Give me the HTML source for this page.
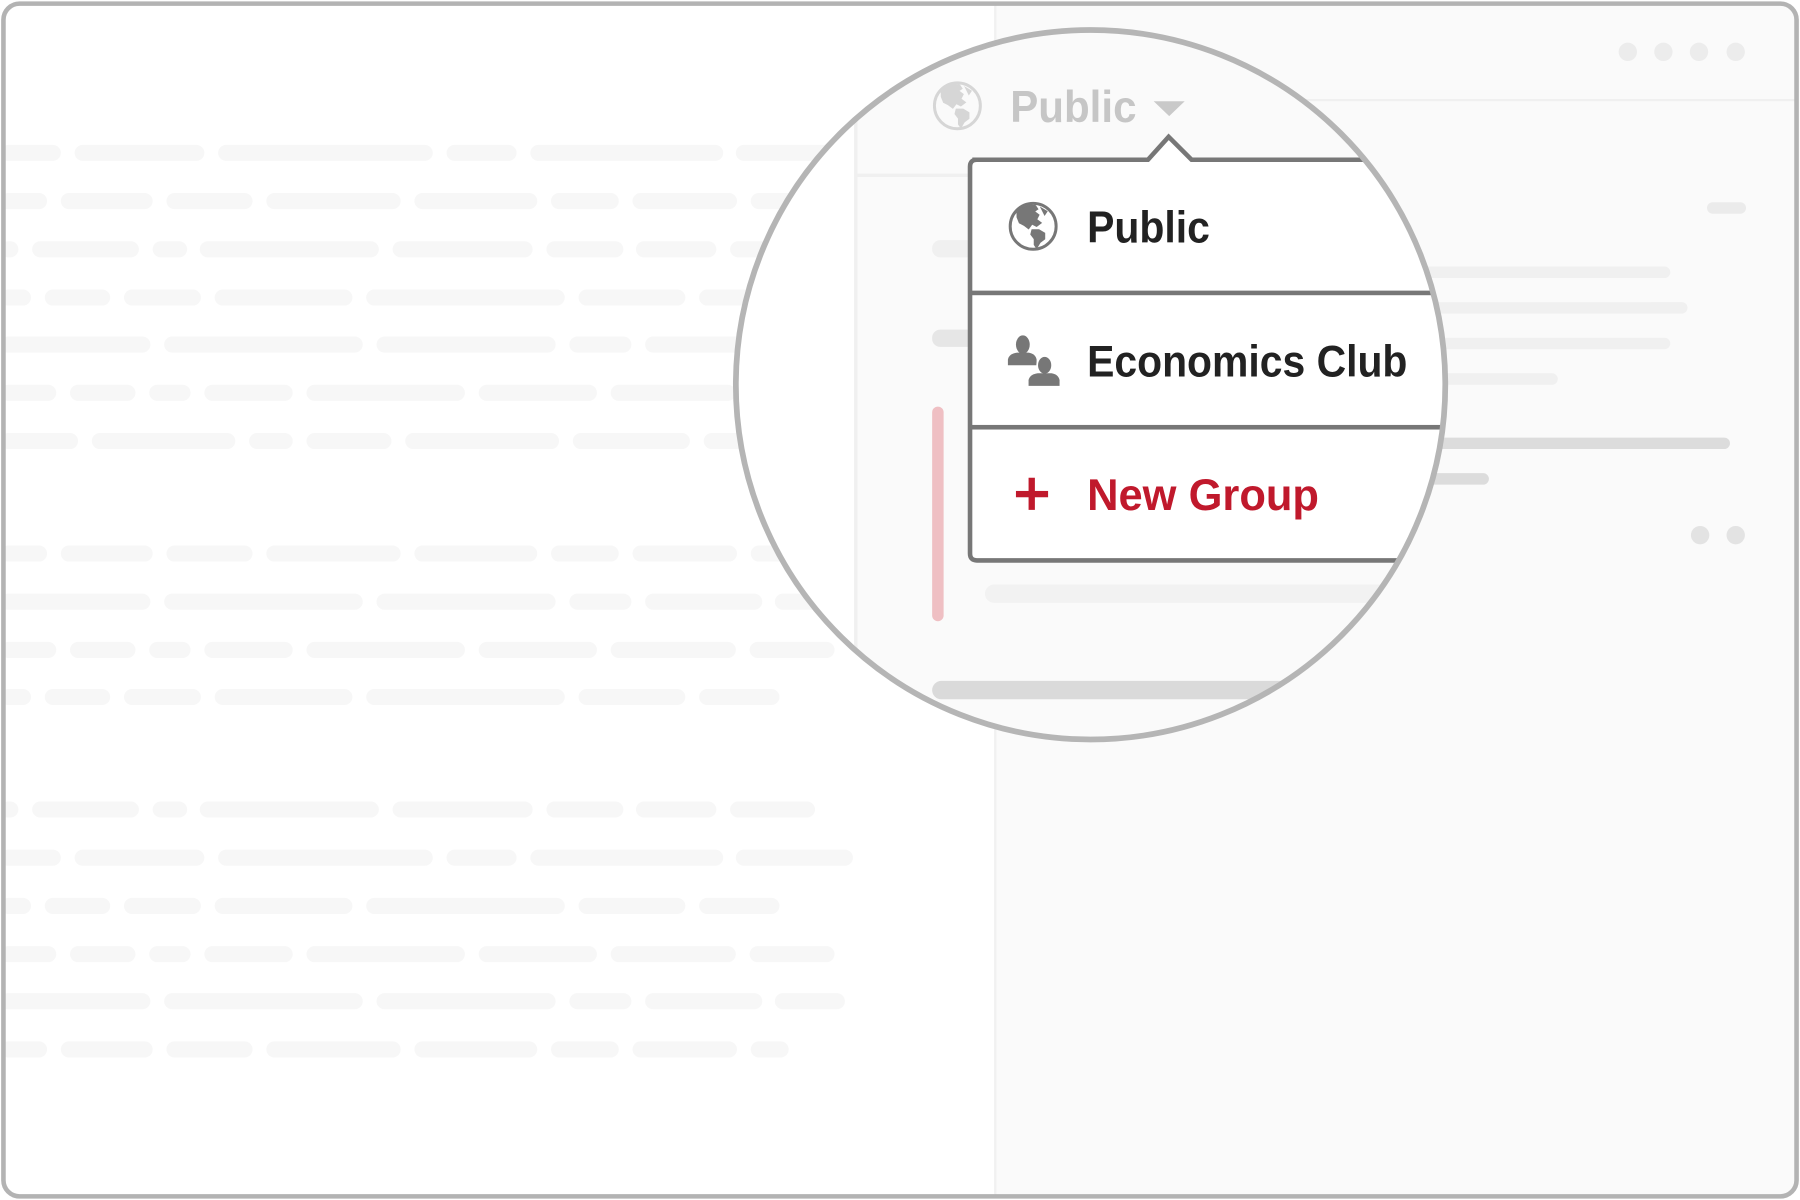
<!DOCTYPE html>
<html><head><meta charset="utf-8"><style>
html,body{margin:0;padding:0;background:#fff;width:1800px;height:1200px;overflow:hidden}
svg{display:block}
text{font-family:"Liberation Sans",sans-serif;font-weight:bold}
</style></head><body>
<svg width="1800" height="1200" viewBox="0 0 1568 1045" xmlns="http://www.w3.org/2000/svg">
<defs>
<clipPath id="c"><circle cx="950" cy="335" r="308"/></clipPath>
<clipPath id="frame"><rect x="4" y="4" width="1560" height="1037" rx="13"/></clipPath>
<g id="globe">
<circle cx="0" cy="0" r="20" fill="none" stroke-width="2.6"/>
<path d="M-14,-12 C-10,-17 -4,-19 2,-18 L4,-15 L1,-13 L5,-10 L3,-6 L7,-3 L3,0 L-1,-2 L-4,2 L-8,-1 L-12,-3 L-14,-8 Z"/>
<path d="M7,-16 L12,-13 L10,-10 Z"/>
<path d="M-1,3 L5,3 L10,6 L10,11 L6,14 L3,19 L1,16 L1,11 L-2,7 Z"/>
</g>
</defs>
<g clip-path="url(#frame)">
<rect x="0" y="0" width="1568" height="1045" fill="#fff"/>
<rect x="867" y="0" width="701" height="1045" fill="#fafafa"/>
<rect x="866" y="0" width="2" height="1045" fill="#f1f1f1"/>
<rect x="1130" y="86" width="440" height="2" fill="#f0f0f0"/>
<g fill="#ececec"><circle cx="1418" cy="45" r="8"/><circle cx="1449" cy="45" r="8"/><circle cx="1480" cy="45" r="8"/><circle cx="1512" cy="45" r="8"/>
<circle cx="1481" cy="466" r="8" fill="#e3e3e3"/><circle cx="1512" cy="466" r="8" fill="#e3e3e3"/></g>
<rect x="1487" y="176" width="34" height="10" rx="5" fill="#ebebeb"/>
<g fill="#f0f0f0">
<rect x="1000" y="232" width="455" height="10" rx="5"/>
<rect x="1000" y="263" width="470" height="10" rx="5"/>
<rect x="1000" y="294" width="455" height="10" rx="5"/>
<rect x="1000" y="325" width="357" height="10" rx="5"/>
</g>
<rect x="1000" y="381" width="507" height="10" rx="5" fill="#dcdcdc"/>
<rect x="1000" y="412" width="297" height="10" rx="5" fill="#dcdcdc"/>
<g fill="#f7f7f7">
<rect x="0" y="126" width="53" height="14" rx="7"/><rect x="65" y="126" width="113" height="14" rx="7"/><rect x="190" y="126" width="187" height="14" rx="7"/><rect x="389" y="126" width="61" height="14" rx="7"/><rect x="462" y="126" width="168" height="14" rx="7"/><rect x="641" y="126" width="100" height="14" rx="7"/>
<rect x="0" y="168" width="41" height="14" rx="7"/><rect x="53" y="168" width="80" height="14" rx="7"/><rect x="145" y="168" width="75" height="14" rx="7"/><rect x="232" y="168" width="117" height="14" rx="7"/><rect x="361" y="168" width="107" height="14" rx="7"/><rect x="480" y="168" width="59" height="14" rx="7"/><rect x="551" y="168" width="91" height="14" rx="7"/><rect x="654" y="168" width="90" height="14" rx="7"/>
<rect x="0" y="210" width="16" height="14" rx="7"/><rect x="28" y="210" width="93" height="14" rx="7"/><rect x="133" y="210" width="30" height="14" rx="7"/><rect x="174" y="210" width="156" height="14" rx="7"/><rect x="342" y="210" width="122" height="14" rx="7"/><rect x="476" y="210" width="67" height="14" rx="7"/><rect x="554" y="210" width="70" height="14" rx="7"/><rect x="636" y="210" width="100" height="14" rx="7"/>
<rect x="0" y="252" width="27" height="14" rx="7"/><rect x="39" y="252" width="57" height="14" rx="7"/><rect x="108" y="252" width="67" height="14" rx="7"/><rect x="187" y="252" width="120" height="14" rx="7"/><rect x="319" y="252" width="173" height="14" rx="7"/><rect x="504" y="252" width="93" height="14" rx="7"/><rect x="609" y="252" width="100" height="14" rx="7"/>
<rect x="0" y="293" width="131" height="14" rx="7"/><rect x="143" y="293" width="173" height="14" rx="7"/><rect x="328" y="293" width="156" height="14" rx="7"/><rect x="496" y="293" width="54" height="14" rx="7"/><rect x="562" y="293" width="102" height="14" rx="7"/><rect x="675" y="293" width="60" height="14" rx="7"/>
<rect x="0" y="335" width="49" height="14" rx="7"/><rect x="61" y="335" width="57" height="14" rx="7"/><rect x="130" y="335" width="36" height="14" rx="7"/><rect x="178" y="335" width="77" height="14" rx="7"/><rect x="267" y="335" width="138" height="14" rx="7"/><rect x="417" y="335" width="103" height="14" rx="7"/><rect x="532" y="335" width="109" height="14" rx="7"/><rect x="653" y="335" width="74" height="14" rx="7"/>
<rect x="0" y="377" width="68" height="14" rx="7"/><rect x="80" y="377" width="125" height="14" rx="7"/><rect x="217" y="377" width="38" height="14" rx="7"/><rect x="267" y="377" width="74" height="14" rx="7"/><rect x="353" y="377" width="134" height="14" rx="7"/><rect x="499" y="377" width="102" height="14" rx="7"/><rect x="613" y="377" width="100" height="14" rx="7"/>
<rect x="0" y="475" width="41" height="14" rx="7"/><rect x="53" y="475" width="80" height="14" rx="7"/><rect x="145" y="475" width="75" height="14" rx="7"/><rect x="232" y="475" width="117" height="14" rx="7"/><rect x="361" y="475" width="107" height="14" rx="7"/><rect x="480" y="475" width="59" height="14" rx="7"/><rect x="551" y="475" width="91" height="14" rx="7"/><rect x="654" y="475" width="80" height="14" rx="7"/>
<rect x="0" y="517" width="131" height="14" rx="7"/><rect x="143" y="517" width="173" height="14" rx="7"/><rect x="328" y="517" width="156" height="14" rx="7"/><rect x="496" y="517" width="54" height="14" rx="7"/><rect x="562" y="517" width="102" height="14" rx="7"/><rect x="675" y="517" width="60" height="14" rx="7"/>
<rect x="0" y="559" width="49" height="14" rx="7"/><rect x="61" y="559" width="57" height="14" rx="7"/><rect x="130" y="559" width="36" height="14" rx="7"/><rect x="178" y="559" width="77" height="14" rx="7"/><rect x="267" y="559" width="138" height="14" rx="7"/><rect x="417" y="559" width="103" height="14" rx="7"/><rect x="532" y="559" width="109" height="14" rx="7"/><rect x="653" y="559" width="74" height="14" rx="7"/>
<rect x="0" y="600" width="27" height="14" rx="7"/><rect x="39" y="600" width="57" height="14" rx="7"/><rect x="108" y="600" width="67" height="14" rx="7"/><rect x="187" y="600" width="120" height="14" rx="7"/><rect x="319" y="600" width="173" height="14" rx="7"/><rect x="504" y="600" width="93" height="14" rx="7"/><rect x="609" y="600" width="70" height="14" rx="7"/>
<rect x="0" y="698" width="16" height="14" rx="7"/><rect x="28" y="698" width="93" height="14" rx="7"/><rect x="133" y="698" width="30" height="14" rx="7"/><rect x="174" y="698" width="156" height="14" rx="7"/><rect x="342" y="698" width="122" height="14" rx="7"/><rect x="476" y="698" width="67" height="14" rx="7"/><rect x="554" y="698" width="70" height="14" rx="7"/><rect x="636" y="698" width="74" height="14" rx="7"/>
<rect x="0" y="740" width="53" height="14" rx="7"/><rect x="65" y="740" width="113" height="14" rx="7"/><rect x="190" y="740" width="187" height="14" rx="7"/><rect x="389" y="740" width="61" height="14" rx="7"/><rect x="462" y="740" width="168" height="14" rx="7"/><rect x="641" y="740" width="102" height="14" rx="7"/>
<rect x="0" y="782" width="27" height="14" rx="7"/><rect x="39" y="782" width="57" height="14" rx="7"/><rect x="108" y="782" width="67" height="14" rx="7"/><rect x="187" y="782" width="120" height="14" rx="7"/><rect x="319" y="782" width="173" height="14" rx="7"/><rect x="504" y="782" width="93" height="14" rx="7"/><rect x="609" y="782" width="70" height="14" rx="7"/>
<rect x="0" y="824" width="49" height="14" rx="7"/><rect x="61" y="824" width="57" height="14" rx="7"/><rect x="130" y="824" width="36" height="14" rx="7"/><rect x="178" y="824" width="77" height="14" rx="7"/><rect x="267" y="824" width="138" height="14" rx="7"/><rect x="417" y="824" width="103" height="14" rx="7"/><rect x="532" y="824" width="109" height="14" rx="7"/><rect x="653" y="824" width="74" height="14" rx="7"/>
<rect x="0" y="865" width="131" height="14" rx="7"/><rect x="143" y="865" width="173" height="14" rx="7"/><rect x="328" y="865" width="156" height="14" rx="7"/><rect x="496" y="865" width="54" height="14" rx="7"/><rect x="562" y="865" width="102" height="14" rx="7"/><rect x="675" y="865" width="61" height="14" rx="7"/>
<rect x="0" y="907" width="41" height="14" rx="7"/><rect x="53" y="907" width="80" height="14" rx="7"/><rect x="145" y="907" width="75" height="14" rx="7"/><rect x="232" y="907" width="117" height="14" rx="7"/><rect x="361" y="907" width="107" height="14" rx="7"/><rect x="480" y="907" width="59" height="14" rx="7"/><rect x="551" y="907" width="91" height="14" rx="7"/><rect x="654" y="907" width="33" height="14" rx="7"/>
</g>
<g clip-path="url(#c)">
<rect x="600" y="0" width="145" height="700" fill="#fff"/>
<rect x="745" y="0" width="700" height="700" fill="#fafafa"/>
<rect x="744" y="0" width="3" height="700" fill="#f0f0f0"/>
<rect x="745" y="151" width="120" height="3" fill="#f0f0f0"/>
<g fill="#f0f0f0">
<rect x="1000" y="232" width="455" height="10" rx="5"/>
<rect x="1000" y="263" width="470" height="10" rx="5"/>
<rect x="1000" y="294" width="455" height="10" rx="5"/>
<rect x="1000" y="325" width="357" height="10" rx="5"/>
</g>
<rect x="1000" y="381" width="507" height="10" rx="5" fill="#dcdcdc"/>
<rect x="1000" y="412" width="297" height="10" rx="5" fill="#dcdcdc"/>
<rect x="812" y="209" width="40" height="15" rx="7" fill="#f0f0f0"/>
<rect x="812" y="287" width="40" height="15" rx="7" fill="#e6e6e6"/>
<rect x="812" y="354" width="10" height="187" rx="5" fill="#efbfc3"/>
<rect x="858" y="509" width="400" height="16" rx="8" fill="#f2f2f2"/>
<rect x="812" y="593" width="400" height="16" rx="8" fill="#dadada"/>
<use href="#globe" x="834" y="92" stroke="#d6d6d6" fill="#d6d6d6"/>
<text x="880" y="106" font-size="39" fill="#c6c6c6" textLength="110" lengthAdjust="spacingAndGlyphs">Public</text>
<path d="M1005,88 L1032,88 L1018.5,101 Z" fill="#c9c9c9"/>
<path d="M847,139 L1000,139 L1018,119 L1038,139 L1300,139 L1300,488 L851,488 Q845,488 845,482 L845,145 Q845,139 851,139 Z" fill="#fff" stroke="#777" stroke-width="4"/>
<rect x="845" y="253" width="460" height="4" fill="#777"/>
<rect x="845" y="370" width="460" height="4" fill="#777"/>
<use href="#globe" x="900" y="197" stroke="#777" fill="#777"/>
<text x="947" y="211" font-size="39" fill="#222" textLength="107" lengthAdjust="spacingAndGlyphs">Public</text>
<g fill="#777">
<ellipse cx="891" cy="300" rx="6" ry="8"/>
<path d="M878,318 L878,313 Q879,308 886,307 L896,307 Q902,308 903,313 L903,318 Z"/>
<ellipse cx="910" cy="318" rx="6.5" ry="8" stroke="#fff" stroke-width="1.5"/>
<path d="M896,336 L896,331 Q897,326 904,325 L916,325 Q922,326 923,331 L923,336 Z"/>
</g>
<text x="947" y="328" font-size="39" fill="#222" textLength="279" lengthAdjust="spacingAndGlyphs">Economics Club</text>
<rect x="896" y="416" width="5.5" height="28" fill="#c0192c"/>
<rect x="885" y="427.5" width="28" height="5.5" fill="#c0192c"/>
<text x="947" y="444" font-size="39" fill="#c0192c" textLength="202" lengthAdjust="spacingAndGlyphs">New Group</text>
</g>
<circle cx="950" cy="335" r="309" fill="none" stroke="#b5b5b5" stroke-width="5"/>
</g>
<rect x="3" y="3" width="1562" height="1039" rx="14" fill="none" stroke="#b3b3b3" stroke-width="4"/>
</svg>
</body></html>
